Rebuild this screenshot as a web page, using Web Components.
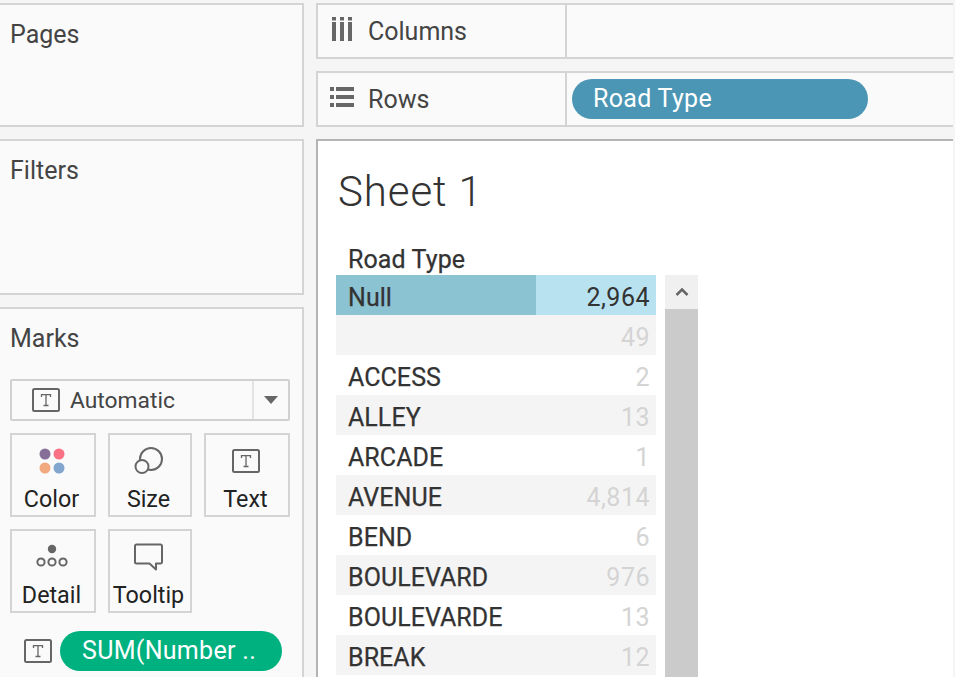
<!DOCTYPE html>
<html>
<head>
<meta charset="utf-8">
<style>
    html, body { margin: 0; height: 100%; overflow: hidden; }
    body { background: #f5f5f5; font-family: Roboto, "Open Sans", sans-serif; color: #333; }
    #app { display: grid; grid-template-columns: 306px 1fr; column-gap: 12px; width: 955px; height: 677px; margin-left: -2px; padding-top: 3px; box-sizing: border-box; overflow: hidden; }
    #left { display: flex; flex-direction: column; gap: 12px; }
    #right { display: flex; flex-direction: column; gap: 12px; margin-right: -4px; }
</style>
</head>
<body>
<div id="app">
    <div id="left">
        <side-card title="Pages" style="height:124px"></side-card>
        <side-card title="Filters" style="height:156px"></side-card>
        <side-card title="Marks" style="height:380px">
            <marks-panel></marks-panel>
        </side-card>
    </div>
    <div id="right">
        <shelf-row label="Columns" icon="columns"></shelf-row>
        <shelf-row label="Rows" icon="rows"><data-pill color="#4b96b4" width="296" pad="21">Road Type</data-pill></shelf-row>
        <view-sheet></view-sheet>
    </div>
</div>

<script>
const T_ICON = `<svg width="28" height="24" viewBox="0 0 28 24" fill="none"><rect x="1" y="1" width="26" height="22" rx="1.500" stroke="#666" stroke-width="2"/><path d="M9.500 9V6.700H18.500V9M14 6.700V17.500M11.500 17.500H16.500" stroke="#666" stroke-width="1.300"/></svg>`;

class SideCard extends HTMLElement {
    constructor() {
        super();
        const root = this.attachShadow({ mode: 'open' });
        root.innerHTML = `
            <style>
                :host { display: block; box-sizing: border-box; background: #fafafa; border: 2px solid #d4d4d4; }
                .title { font-size: 25px; line-height: 30px; padding: 15px 0 0 10px; color: #444; }
            </style>
            <div class="title">${this.getAttribute('title')}</div>
            <slot></slot>
        `;
    }
}

class MarkButton extends HTMLElement {
    constructor() {
        super();
        const root = this.attachShadow({ mode: 'open' });
        root.innerHTML = `
            <style>
                :host { display: flex; flex-direction: column; align-items: center; box-sizing: border-box; border: 2px solid #d4d4d4; height: 84px; padding-right: 3px; }
                .icon { height: 38px; margin-top: 7px; display: flex; align-items: center; justify-content: center; }
                .label { margin-top: 4px; font-size: 23.300px; line-height: 30px; color: #222; white-space: nowrap; }
            </style>
            <div class="icon"><slot></slot></div>
            <div class="label">${this.getAttribute('label')}</div>
        `;
    }
}

class MarksPanel extends HTMLElement {
    constructor() {
        super();
        const root = this.attachShadow({ mode: 'open' });
        root.innerHTML = `
            <style>
                :host { display: block; padding: 25px 0 0 10px; }
                .dropdown { display: flex; align-items: center; box-sizing: border-box; width: 280px; height: 42px; border: 2px solid #d0d0d0; border-radius: 2px; }
                .type { flex: 1; display: flex; align-items: center; gap: 10px; padding-left: 20px; font-size: 22.800px; color: #444; }
                .arrow { width: 34px; height: 100%; border-left: 2px solid #e4e4e4; display: flex; align-items: center; justify-content: center; }
                .arrow i { border: 7px solid transparent; border-top: 8px solid #666; border-bottom: 0; }
                .grid { display: grid; grid-template-columns: 86px 84px 86px; column-gap: 12px; row-gap: 12px; margin-top: 12px; }
                .field { display: flex; align-items: center; gap: 8px; margin: 18px 0 0 14px; }
            </style>
            <div class="dropdown">
                <div class="type">${T_ICON}<span>Automatic</span></div>
                <div class="arrow"><i></i></div>
            </div>
            <div class="grid">
                <mark-button label="Color">
                    <svg width="26" height="26" viewBox="0 0 26 26"><circle cx="6" cy="6" r="5.500" fill="#86709a"/><circle cx="20" cy="6" r="5.500" fill="#fb7185"/><circle cx="6" cy="20" r="5.500" fill="#f2a97f"/><circle cx="20" cy="20" r="5.500" fill="#82a6cd"/></svg>
                </mark-button>
                <mark-button label="Size">
                    <svg width="30" height="28" viewBox="0 0 30 28" fill="none" stroke="#666" stroke-width="2"><circle cx="17" cy="12" r="11"/><circle cx="8" cy="19.500" r="6.500" fill="#fafafa"/></svg>
                </mark-button>
                <mark-button label="Text">${T_ICON}</mark-button>
                <mark-button label="Detail">
                    <svg width="32" height="26" viewBox="0 0 32 26" fill="none" stroke="#666" stroke-width="2"><circle cx="16" cy="5" r="4.200" fill="#666" stroke="none"/><circle cx="5" cy="18" r="3.600"/><circle cx="16" cy="18" r="3.600"/><circle cx="27" cy="18" r="3.600"/></svg>
                </mark-button>
                <mark-button label="Tooltip">
                    <svg width="30" height="28" viewBox="0 0 30 28" fill="none" stroke="#666" stroke-width="2" stroke-linejoin="round"><path d="M2.500 1.500H26.500A1.500 1.500 0 0 1 28 3V19A1.500 1.500 0 0 1 26.500 20.500H22V26.500L15.500 20.500H2.500A1.500 1.500 0 0 1 1 19V3A1.500 1.500 0 0 1 2.500 1.500Z"/></svg>
                </mark-button>
            </div>
            <div class="field">${T_ICON}<data-pill color="#00b180" width="222" pad="22">SUM(Number ..</data-pill></div>
        `;
    }
}

class DataPill extends HTMLElement {
    constructor() {
        super();
        const root = this.attachShadow({ mode: 'open' });
        root.innerHTML = `
            <style>
                :host { display: block; box-sizing: border-box; height: 40px; border-radius: 20px; color: #fff; font-size: 25px; line-height: 40px; white-space: nowrap; letter-spacing: 0.3px;
                    background: ${this.getAttribute('color')}; width: ${this.getAttribute('width')}px; padding-left: ${this.getAttribute('pad')}px; }
            </style>
            <slot></slot>
        `;
    }
}

class ShelfRow extends HTMLElement {
    constructor() {
        super();
        const root = this.attachShadow({ mode: 'open' });
        const icons = {
            columns: `<svg width="20" height="24" viewBox="0 0 20 24" fill="#666"><rect width="4" height="3.500"/><rect x="8" width="4" height="3.500"/><rect x="16" width="4" height="3.500"/><rect y="5" width="4" height="19"/><rect x="8" y="5" width="4" height="19"/><rect x="16" y="5" width="4" height="19"/></svg>`,
            rows: `<svg width="24" height="20" viewBox="0 0 24 20" fill="#666"><rect width="4" height="4"/><rect x="6" width="18" height="4"/><rect width="4" height="4" y="8"/><rect x="6" width="18" height="4" y="8"/><rect width="4" height="4" y="16"/><rect x="6" width="18" height="4" y="16"/></svg>`
        };
        root.innerHTML = `
            <style>
                :host { display: flex; box-sizing: border-box; height: 56px; background: #fafafa; border: 2px solid #d4d4d4; }
                .head { box-sizing: border-box; width: 249px; border-right: 2px solid #d4d4d4; display: flex; align-items: center; gap: 14px; padding-left: 12px; font-size: 25px; color: #444; }
                .icon { width: 24px; display: flex; justify-content: center; margin-top: -4px; }
                .body { flex: 1; display: flex; align-items: center; padding-left: 5px; }
            </style>
            <div class="head"><span class="icon">${icons[this.getAttribute('icon')]}</span><span>${this.getAttribute('label')}</span></div>
            <div class="body"><slot></slot></div>
        `;
    }
}

class TableRow extends HTMLElement {
    constructor() {
        super();
        const root = this.attachShadow({ mode: 'open' });
        root.innerHTML = `
            <style>
                :host { display: flex; height: 40px; font-size: 25px; line-height: 45px; }
                .name { width: 200px; box-sizing: border-box; padding-left: 12px; color: #333; letter-spacing: 0.05px; -webkit-text-stroke: 0.25px #333; white-space: nowrap; }
                .value { width: 120px; box-sizing: border-box; padding-right: 6px; text-align: right; color: #d4d4d4; letter-spacing: 0.5px; }
                :host(:nth-of-type(even)) { background: #f4f4f4; }
                :host([selected]) .name { background: #8cc3d3; }
                :host([selected]) .value { background: #b9e2f1; color: #333; }
            </style>
            <div class="name">${this.getAttribute('name') || ''}</div>
            <div class="value">${this.getAttribute('value')}</div>
        `;
    }
}

class ViewSheet extends HTMLElement {
    constructor() {
        super();
        const root = this.attachShadow({ mode: 'open' });
        const rows = [['Null', '2,964'], ['', '49'], ['ACCESS', '2'], ['ALLEY', '13'], ['ARCADE', '1'], ['AVENUE', '4,814'], ['BEND', '6'], ['BOULEVARD', '976'], ['BOULEVARDE', '13'], ['BREAK', '12']];
        const html = rows.map((r, i) =>
            `<table-row name="${r[0]}" value="${r[1]}"${i === 0 ? ' selected' : ''}></table-row>`).join('');
        root.innerHTML = `
            <style>
                :host { display: block; flex: 1; box-sizing: border-box; background: #fff; border: 2px solid #b4b4b4; border-bottom: 0; padding: 25px 0 0 18px; min-height: 0; overflow: hidden; }
                h1 { margin: 0 0 0 2px; font-size: 42px; line-height: 52px; font-weight: 300; color: #333; letter-spacing: 0.9px; }
                .head { margin: 25px 0 0 12px; height: 32px; font-size: 25px; line-height: 34px; letter-spacing: 0.1px; -webkit-text-stroke: 0.25px #333; color: #333; }
                .wrap { display: flex; gap: 9px; }
                .table { width: 320px; border-top: 1px solid #ccc; }
                .table-body { margin-top: -1px; }
                .scroll { width: 33px; height: 420px; background: #cbcbcb; }
                .up { height: 34px; background: #f0f0f0; display: flex; align-items: center; justify-content: center; }
            </style>
            <h1>Sheet 1</h1>
            <div class="head">Road Type</div>
            <div class="wrap">
                <div class="table"><div class="table-body">${html}</div></div>
                <div class="scroll"><div class="up"><svg width="14" height="10" viewBox="0 0 14 10" fill="none" stroke="#666" stroke-width="2.500"><path d="M1.500 8L7 2.500L12.500 8"/></svg></div></div>
            </div>
        `;
    }
}

customElements.define('side-card', SideCard);
customElements.define('mark-button', MarkButton);
customElements.define('data-pill', DataPill);
customElements.define('marks-panel', MarksPanel);
customElements.define('shelf-row', ShelfRow);
customElements.define('table-row', TableRow);
customElements.define('view-sheet', ViewSheet);
</script>
</body>
</html>
